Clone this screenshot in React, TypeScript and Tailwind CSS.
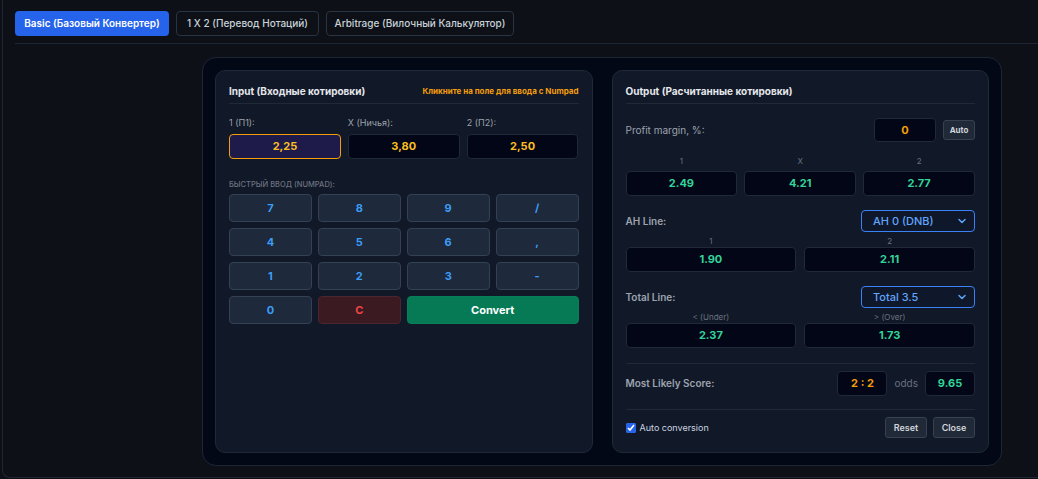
import { ChevronDown } from "lucide-react";

const keys = ["7", "8", "9", "/", "4", "5", "6", ",", "1", "2", "3", "-"];

function OutBox({ value }: { value: string }) {
  return (
    <div className="flex-1 h-[25px] flex items-center justify-center rounded-[4px] border border-[#1f2937] bg-[#020617] text-[11px] font-bold text-[#34d399]">
      {value}
    </div>
  );
}

function SmallLabel({ text }: { text: string }) {
  return <div className="flex-1 text-center text-[8px] leading-[10px] text-[#6b7280]">{text}</div>;
}

function LineSelect({ label, value }: { label: string; value: string }) {
  return (
    <div className="flex items-center justify-between mt-[14px]">
      <span className="text-[10px] font-semibold text-[#9ca3af]">{label}</span>
      <div className="w-[114px] h-[22px] flex items-center justify-between pl-[11px] pr-[6px] rounded-[4px] border border-[#3b82f6] bg-[#0f172a] text-[11px] font-medium text-[#60a5fa]">
        <span>{value}</span>
        <ChevronDown size={12} strokeWidth={3} />
      </div>
    </div>
  );
}

export default function App() {
  return (
    <div className="min-h-screen bg-[#0d1117] font-['Inter','Liberation_Sans',sans-serif] overflow-hidden">
      <div className="ml-[2px] h-[478px] border-l border-b border-[#1f2633] rounded-bl-[8px]">
        <div className="ml-[12px] pt-[11px] pb-[7px] flex gap-[7px] border-b border-[#1f2633]">
          <button className="w-[154px] h-[25px] rounded-[4px] bg-[#2563eb] text-[10px] font-semibold text-white">
            Basic (Базовый Конвертер)
          </button>
          <button className="w-[143px] h-[25px] rounded-[4px] border border-[#2a3342] text-[10px] font-medium text-[#c9d1d9]">
            1 X 2 (Перевод Нотаций)
          </button>
          <button className="w-[188px] h-[25px] rounded-[4px] border border-[#2a3342] text-[10px] font-medium text-[#c9d1d9]">
            Arbitrage (Вилочный Калькулятор)
          </button>
        </div>

        <div className="ml-[199px] mt-[13px] w-[800px] rounded-[14px] border border-[#1e2535] bg-[#030816] p-[12px] flex gap-[19px]">
          {/* Input */}
          <div className="flex-1 rounded-[10px] border border-[#1f2937] bg-[#111827] px-[13px] pt-[13px]">
            <div className="flex items-center justify-between pb-[5px] border-b border-[#1f2937]">
              <span className="text-[10px] leading-[14px] font-bold text-[#e5e7eb]">Input (Входные котировки)</span>
              <span className="text-[8px] font-bold text-[#f59e0b]">Кликните на поле для ввода с Numpad</span>
            </div>
            <div className="flex gap-[7px] mt-[13px]">
              {[
                ["1 (П1):", "2,25", true],
                ["X (Ничья):", "3,80", false],
                ["2 (П2):", "2,50", false],
              ].map(([l, v, a]) => (
                <div key={l as string} className="flex-1">
                  <div className="text-[9px] leading-[12px] text-[#9ca3af] mb-[5px]">{l}</div>
                  <div
                    className={`h-[25px] flex items-center justify-center rounded-[4px] border text-[11px] font-bold text-[#fbbf24] ${
                      a ? "border-[#f59e0b] bg-[#1e1b4b]" : "border-[#1f2937] bg-[#020617]"
                    }`}
                  >
                    {v}
                  </div>
                </div>
              ))}
            </div>
            <div className="mt-[20px] mb-[3px] text-[7.5px] leading-[12px] font-medium text-[#6b7280] uppercase">
              Быстрый ввод (Numpad):
            </div>
            <div className="grid grid-cols-4 gap-[6px]">
              {keys.map((k) => (
                <button
                  key={k}
                  className="h-[28px] rounded-[4px] border border-[#334155] bg-[#1e293b] text-[11px] font-bold text-[#3b9cf6]"
                >
                  {k}
                </button>
              ))}
              <button className="h-[28px] rounded-[4px] border border-[#334155] bg-[#1e293b] text-[11px] font-bold text-[#3b9cf6]">
                0
              </button>
              <button className="h-[28px] rounded-[4px] border border-[#4b2530] bg-[#3b1a22] text-[11px] font-bold text-[#ef4444]">
                C
              </button>
              <button className="col-span-2 h-[28px] rounded-[4px] border border-[#07805a] bg-[#057a55] text-[11px] font-bold text-white">
                Convert
              </button>
            </div>
          </div>

          {/* Output */}
          <div className="flex-1 rounded-[10px] border border-[#1f2937] bg-[#111827] px-[13px] pt-[13px] pb-[14px]">
            <div className="flex items-center pb-[5px] border-b border-[#1f2937]">
              <span className="text-[10px] leading-[14px] font-bold text-[#e5e7eb]">Output (Расчитанные котировки)</span>
            </div>
            <div className="flex items-center mt-[14px] h-[24px]">
              <span className="flex-1 text-[10px] text-[#9ca3af]">Profit margin, %:</span>
              <div className="w-[62px] h-[24px] flex items-center justify-center rounded-[4px] border border-[#1f2937] bg-[#020617] text-[11px] font-bold text-[#f59e0b]">
                0
              </div>
              <button className="ml-[7px] w-[32px] h-[20px] rounded-[3px] border border-[#374151] bg-[#1f2937] text-[8px] font-bold text-[#d1d5db]">
                Auto
              </button>
            </div>
            <div className="flex gap-[7px] mt-[14px] mb-[5px]">
              <SmallLabel text="1" />
              <SmallLabel text="X" />
              <SmallLabel text="2" />
            </div>
            <div className="flex gap-[7px]">
              <OutBox value="2.49" />
              <OutBox value="4.21" />
              <OutBox value="2.77" />
            </div>

            <LineSelect label="AH Line:" value="AH 0 (DNB)" />
            <div className="flex gap-[8px] mt-[4px] mb-[1px]">
              <SmallLabel text="1" />
              <SmallLabel text="2" />
            </div>
            <div className="flex gap-[8px]">
              <OutBox value="1.90" />
              <OutBox value="2.11" />
            </div>

            <LineSelect label="Total Line:" value="Total 3.5" />
            <div className="flex gap-[8px] mt-[4px] mb-[1px]">
              <SmallLabel text="< (Under)" />
              <SmallLabel text="> (Over)" />
            </div>
            <div className="flex gap-[8px]">
              <OutBox value="2.37" />
              <OutBox value="1.73" />
            </div>

            <div className="mt-[15px] pt-[7px] pb-[13px] border-t border-b border-[#1f2937] flex items-center">
              <span className="flex-1 text-[10px] font-semibold text-[#9ca3af]">Most Likely Score:</span>
              <div className="w-[50px] h-[25px] flex items-center justify-center rounded-[4px] border border-[#1f2937] bg-[#020617] text-[11px] font-bold text-[#f59e0b]">
                2 : 2
              </div>
              <span className="mx-[7px] text-[10px] text-[#6b7280]">odds</span>
              <div className="w-[50px] h-[25px] flex items-center justify-center rounded-[4px] border border-[#1f2937] bg-[#020617] text-[11px] font-bold text-[#34d399]">
                9.65
              </div>
            </div>

            <div className="pt-[7px] flex items-center">
              <label className="flex-1 flex items-center gap-[4px] text-[9px] text-[#cbd5e1]">
                <input type="checkbox" defaultChecked className="w-[10px] h-[10px] accent-[#2563eb]" />
                Auto conversion
              </label>
              <button className="w-[42px] h-[21px] rounded-[3px] border border-[#374151] bg-[#1f2937] text-[9px] font-semibold text-[#d1d5db]">
                Reset
              </button>
              <button className="ml-[6px] w-[42px] h-[21px] rounded-[3px] border border-[#374151] bg-[#1f2937] text-[9px] font-semibold text-[#d1d5db]">
                Close
              </button>
            </div>
          </div>
        </div>
      </div>
    </div>
  );
}
